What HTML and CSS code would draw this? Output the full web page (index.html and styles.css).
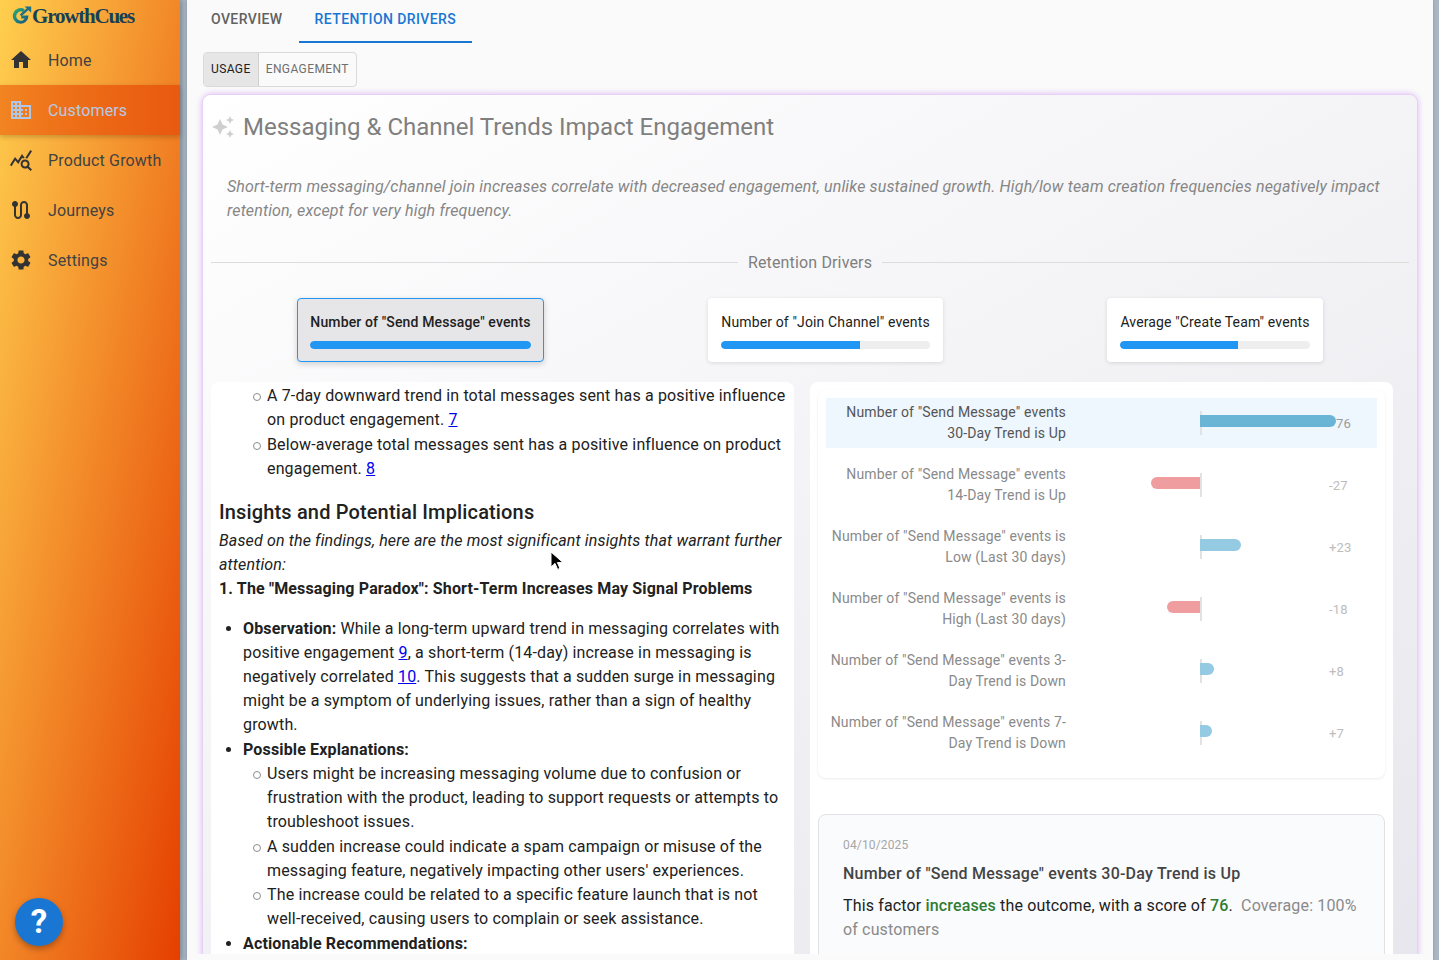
FILE: index.html
```html
<!DOCTYPE html>
<html lang="en">
<head>
<meta charset="utf-8">
<title>GrowthCues</title>
<link rel="stylesheet" href="styles.css">
</head>
<body>
<div class="shell">
  <aside class="sidebar">
    <div class="logo">
      <svg class="logo-mark" viewBox="0 0 20 18" width="20" height="18" aria-hidden="true">
        <defs><linearGradient id="lg" x1="0" y1="0" x2="1" y2="1"><stop offset="0" stop-color="#2fb06a"/><stop offset=".55" stop-color="#1c7d86"/><stop offset="1" stop-color="#1b4f7a"/></linearGradient></defs>
        <path d="M12.6 3.2A7.8 7.8 0 1 0 16.4 9.6H9.2v3h3.6A4.6 4.6 0 1 1 11 5.9Z" fill="url(#lg)"/>
        <path d="M8.6 9.4 16.2 2.6" fill="none" stroke="#1d6f84" stroke-width="2.4"/>
        <path d="M12.6 0.6h6.6v6.2z" fill="#1d6f84"/>
      </svg>
      <span class="logo-text">GrowthCues</span>
    </div>
    <nav class="nav">
      <a class="nav-item"><svg class="nav-icon" viewBox="0 0 24 24"><path d="M10 20v-6h4v6h5v-8h3L12 3 2 12h3v8z"/></svg><span>Home</span></a>
      <a class="nav-item selected"><svg class="nav-icon" viewBox="0 0 24 24"><path d="M12 7V3H2v18h20V7H12zM6 19H4v-2h2v2zm0-4H4v-2h2v2zm0-4H4V9h2v2zm0-4H4V5h2v2zm4 12H8v-2h2v2zm0-4H8v-2h2v2zm0-4H8V9h2v2zm0-4H8V5h2v2zm10 12h-8v-2h2v-2h-2v-2h2v-2h-2V9h8v10zm-2-8h-2v2h2v-2zm0 4h-2v2h2v-2z"/></svg><span>Customers</span></a>
      <a class="nav-item"><svg class="nav-icon" viewBox="0 0 24 24"><path d="M19.88 18.47c.44-.7.7-1.51.7-2.39 0-2.49-2.01-4.5-4.5-4.5s-4.5 2.01-4.5 4.5 2.01 4.5 4.49 4.5c.88 0 1.7-.26 2.39-.7L21.58 23 23 21.58l-3.12-3.11zm-3.8.11c-1.38 0-2.5-1.12-2.5-2.5s1.12-2.5 2.5-2.5 2.5 1.12 2.5 2.5-1.12 2.5-2.5 2.5zm-.36-8.5c-.74.02-1.45.18-2.1.45l-.55-.83-3.8 6.18-3.01-3.52-3.63 5.81L1 17l5-8 3 3.5L13 6l2.72 4.08zm2.59.5c-.64-.28-1.33-.45-2.05-.49L21.38 2 23 3.18l-4.69 7.4z"/></svg><span>Product Growth</span></a>
      <a class="nav-item"><svg class="nav-icon" viewBox="0 0 24 24"><path d="M19 15.18V7c0-2.21-1.79-4-4-4s-4 1.79-4 4v10c0 1.1-.9 2-2 2s-2-.9-2-2V8.82C8.16 8.4 9 7.3 9 6c0-1.66-1.34-3-3-3S3 4.34 3 6c0 1.3.84 2.4 2 2.82V17c0 2.21 1.79 4 4 4s4-1.79 4-4V7c0-1.1.9-2 2-2s2 .9 2 2v8.18c-1.16.41-2 1.51-2 2.82 0 1.66 1.34 3 3 3s3-1.34 3-3c0-1.3-.84-2.4-2-2.82z"/></svg><span>Journeys</span></a>
      <a class="nav-item"><svg class="nav-icon" viewBox="0 0 24 24"><path d="M19.14 12.94c.04-.3.06-.61.06-.94 0-.32-.02-.64-.07-.94l2.03-1.58c.18-.14.23-.41.12-.61l-1.92-3.32c-.12-.22-.37-.29-.59-.22l-2.39.96c-.5-.38-1.03-.7-1.62-.94l-.36-2.54c-.04-.24-.24-.41-.48-.41h-3.84c-.24 0-.43.17-.47.41l-.36 2.54c-.59.24-1.13.57-1.62.94l-2.39-.96c-.22-.08-.47 0-.59.22L2.74 8.87c-.12.21-.08.47.12.61l2.03 1.58c-.05.3-.09.63-.09.94s.02.64.07.94l-2.03 1.58c-.18.14-.23.41-.12.61l1.92 3.32c.12.22.37.29.59.22l2.39-.96c.5.38 1.03.7 1.62.94l.36 2.54c.05.24.24.41.48.41h3.84c.24 0 .44-.17.47-.41l.36-2.54c.59-.24 1.13-.56 1.62-.94l2.39.96c.22.08.47 0 .59-.22l1.92-3.32c.12-.22.07-.47-.12-.61l-2.01-1.58zM12 15.6c-1.98 0-3.6-1.62-3.6-3.6s1.62-3.6 3.6-3.6 3.6 1.62 3.6 3.6-1.62 3.6-3.6 3.6z"/></svg><span>Settings</span></a>
    </nav>
    <button class="help">?</button>
  </aside>

  <main class="main">
    <div class="scroll">
      <div class="tabs">
        <a class="tab">Overview</a>
        <a class="tab active">Retention Drivers</a>
      </div>
      <div class="toggle">
        <span class="toggle-btn on">Usage</span><span class="toggle-btn">Engagement</span>
      </div>
      <section class="card">
        <header class="card-title">
          <svg class="spark" viewBox="0 0 24 24"><path d="M19 9l1.25-2.75L23 5l-2.75-1.25L19 1l-1.25 2.75L15 5l2.75 1.25L19 9zm-7.5.5L9 4 6.5 9.5 1 12l5.5 2.5L9 20l2.5-5.5L17 12l-5.5-2.5zM19 15l-1.25 2.75L15 19l2.75 1.25L19 23l1.25-2.75L23 19l-2.75-1.25L19 15z"/></svg>
          <h1>Messaging &amp; Channel Trends Impact Engagement</h1>
        </header>
        <p class="summary">Short-term messaging/channel join increases correlate with decreased engagement, unlike sustained growth. High/low team creation frequencies negatively impact retention, except for very high frequency.</p>
        <div class="divider"><span>Retention Drivers</span></div>
        <div class="drivers">
          <div class="driver current"><div class="driver-name">Number of "Send Message" events</div><div class="track"><div class="fill" style="width:100%"></div></div></div>
          <div class="driver"><div class="driver-name">Number of "Join Channel" events</div><div class="track"><div class="fill" style="width:66.3%"></div></div></div>
          <div class="driver"><div class="driver-name">Average "Create Team" events</div><div class="track"><div class="fill" style="width:62.2%"></div></div></div>
        </div>
        <div class="panels">
          <div class="panel report">
            <ul class="sub first">
              <li>A 7-day downward trend in total messages sent has a positive influence on product engagement. <a href="#">7</a></li>
              <li>Below-average total messages sent has a positive influence on product engagement. <a href="#">8</a></li>
            </ul>
            <h2>Insights and Potential Implications</h2>
            <p class="lead"><em>Based on the findings, here are the most significant insights that warrant further attention:</em></p>
            <p class="lead"><strong>1. The "Messaging Paradox": Short-Term Increases May Signal Problems</strong></p>
            <ul class="top">
              <li><strong>Observation:</strong> While a long-term upward trend in messaging correlates with positive engagement <a href="#">9</a>, a short-term (14-day) increase in messaging is negatively correlated <a href="#">10</a>. This suggests that a sudden surge in messaging might be a symptom of underlying issues, rather than a sign of healthy growth.</li>
              <li><strong>Possible Explanations:</strong>
                <ul class="sub">
                  <li>Users might be increasing messaging volume due to confusion or frustration with the product, leading to support requests or attempts to troubleshoot issues.</li>
                  <li>A sudden increase could indicate a spam campaign or misuse of the messaging feature, negatively impacting other users' experiences.</li>
                  <li>The increase could be related to a specific feature launch that is not well-received, causing users to complain or seek assistance.</li>
                </ul>
              </li>
              <li><strong>Actionable Recommendations:</strong></li>
            </ul>
          </div>
          <div class="panel side">
            <div class="factors">
              <div class="factor current">
                <div class="factor-label">Number of "Send Message" events 30-Day Trend is Up</div>
                <div class="neg"></div><div class="axis"></div>
                <div class="pos"><div class="bar up strong" style="width:136px"></div><span class="value tight">76</span></div>
              </div>
              <div class="factor">
                <div class="factor-label">Number of "Send Message" events 14-Day Trend is Up</div>
                <div class="neg"><div class="bar down" style="width:49px"></div></div><div class="axis"></div>
                <div class="pos"><span class="value">-27</span></div>
              </div>
              <div class="factor">
                <div class="factor-label">Number of "Send Message" events is Low (Last 30 days)</div>
                <div class="neg"></div><div class="axis"></div>
                <div class="pos"><div class="bar up" style="width:41px"></div><span class="value">+23</span></div>
              </div>
              <div class="factor">
                <div class="factor-label">Number of "Send Message" events is High (Last 30 days)</div>
                <div class="neg"><div class="bar down" style="width:33px"></div></div><div class="axis"></div>
                <div class="pos"><span class="value">-18</span></div>
              </div>
              <div class="factor">
                <div class="factor-label">Number of "Send Message" events 3-Day Trend is Down</div>
                <div class="neg"></div><div class="axis"></div>
                <div class="pos"><div class="bar up" style="width:14px"></div><span class="value">+8</span></div>
              </div>
              <div class="factor">
                <div class="factor-label">Number of "Send Message" events 7-Day Trend is Down</div>
                <div class="neg"></div><div class="axis"></div>
                <div class="pos"><div class="bar up" style="width:12px"></div><span class="value">+7</span></div>
              </div>
            </div>
            <article class="detail">
              <div class="detail-date">04/10/2025</div>
              <div class="detail-title">Number of "Send Message" events 30-Day Trend is Up</div>
              <p class="detail-body">This factor <b class="good">increases</b> the outcome, with a score of <b class="good">76</b>. <span class="muted">&nbsp;Coverage: 100% of customers</span></p>
            </article>
          </div>
        </div>
      </section>
    </div>
  </main>
  <svg class="cursor" viewBox="0 0 14 20" width="14" height="20" aria-hidden="true"><path d="M1 1v15l4-3.6 2.6 6 2.4-1-2.6-5.8H13z" fill="#000" stroke="#fff" stroke-width="1"/></svg>
</div>
</body>
</html>
```
FILE: styles.css
```css
* { box-sizing: border-box; }
html, body { margin: 0; height: 100%; overflow: hidden; }
body { font-family: Roboto, "Liberation Sans", sans-serif; color: #212121; letter-spacing: .15px; }

.shell { position: relative; display: flex; width: 1439px; height: 960px; background: linear-gradient(90deg, #7c8a96, #a9b6c4 7px); overflow: hidden; }

.sidebar { position: relative; flex: 0 0 180px; height: 960px; background: linear-gradient(to bottom right, #ffcf4f, #e53f00); box-shadow: 2px 0 5px rgba(0,0,0,.25); }
.logo { display: flex; align-items: center; height: 35px; padding: 0 0 3px 12px; gap: 0; }
.logo-mark { flex: none; margin-top: -3px; }
.logo-text { font-family: "Liberation Serif", serif; font-weight: 700; font-size: 21px; letter-spacing: -1.2px; color: #173f56; line-height: 30px; }
.nav-item { display: flex; align-items: center; height: 50px; padding-left: 9px; gap: 15px; font-size: 16px; color: #424242; }
.nav-item.selected { background: linear-gradient(90deg, rgba(238,110,20,.75), #e95a10); color: #b7c9e2; box-shadow: 0 2px 5px rgba(0,0,0,.2); }
.nav-icon { width: 24px; height: 24px; fill: #333; flex: none; }
.selected .nav-icon { fill: #b0c7e6; }
.help { position: absolute; left: 15px; top: 898px; width: 48px; height: 48px; border: 0; border-radius: 50%; background: #1976d2; color: #fff; font: 700 33px/48px Roboto, sans-serif; padding: 0; box-shadow: 0 3px 6px rgba(0,0,0,.3); }

.main { flex: 1; margin: 0 6px 0 7px; height: 960px; background: #fafafa; padding-bottom: 6px; box-shadow: 0 0 3px rgba(0,0,0,.2); }
.scroll { height: 954px; overflow: hidden; padding: 0 16px 0 8px; }

.tabs { display: flex; height: 43px; }
.tab { height: 43px; padding: 0 16px 5px; display: flex; align-items: center; font-size: 14px; font-weight: 500; letter-spacing: .4px; text-transform: uppercase; color: #616161; }
.tab.active { color: #1976d2; border-bottom: 2px solid #1976d2; padding-bottom: 3px; }

.toggle { display: inline-flex; margin: 9px 0 8px 8px; height: 35px; border: 1px solid #d9d9d9; border-radius: 4px; overflow: hidden; vertical-align: top; }
.toggle-btn { display: flex; align-items: center; padding: 0 7px 2px; font-size: 12px; letter-spacing: .4px; text-transform: uppercase; color: #6f6f6f; }
.toggle-btn.on { background: #e6e6e6; color: #212121; border-right: 1px solid #cfcfcf; }

.card { margin-left: 8px; height: 1100px; padding: 16px 8px; border-radius: 8px; background: linear-gradient(150deg, #ffffff, #e3e3ea); box-shadow: 0 0 0 1px #e6d0f5, 0 0 6px 1px #dcb8f5; }
.card-title { display: flex; align-items: center; height: 32px; gap: 8px; }
.spark { width: 24px; height: 24px; fill: #cfcfcf; flex: none; }
.card-title h1 { margin: 0; font-size: 24px; font-weight: 400; letter-spacing: 0; color: #7f7f7f; line-height: 32px; }
.summary { margin: 32px 16px 0; font-size: 16px; line-height: 24px; font-style: italic; color: #868686; }

.divider { display: flex; align-items: center; gap: 10px; margin-top: 27px; height: 24px; font-size: 16px; color: #7f7f7f; }
.divider::before, .divider::after { content: ""; height: 1px; background: #dcdcdc; flex: 1; }
.drivers { display: flex; justify-content: space-around; margin: 24px 4px 0; }
.driver { padding: 14px 13px 13px; height: 64px; background: #fff; border-radius: 4px; box-shadow: 0 1px 4px rgba(0,0,0,.12); }
.driver.current { background: #e6e6e9; border: 1px solid #2196f3; padding: 13px 12px 12px; box-shadow: 0 2px 6px rgba(0,0,0,.18); }
.driver-name { font-size: 14px; line-height: 21px; letter-spacing: .135px; white-space: nowrap; color: #212121; }
.current .driver-name { font-weight: 500; }
.track { margin-top: 8px; height: 8px; border-radius: 4px; background: #eeeeee; overflow: hidden; }
.fill { height: 100%; background: #2196f3; border-radius: 4px 0 0 4px; }
.current .fill { border-radius: 4px; }

.panels { display: grid; grid-template-columns: 583px 583px; gap: 16px; margin-top: 20px; }
.panel { background: #fff; border-radius: 8px; }

.report { padding: 2px 8px 0; font-size: 16px; line-height: 24px; color: #212121; }
.report ul { margin: 0; padding: 0; }
.report li { margin-top: .78px; }
.report li:first-child { margin-top: 0; }
.report .sub { list-style: none; padding-left: 24px; }
.report .sub li { position: relative; }
.report .sub li::before { content: ""; position: absolute; left: -14px; top: 9px; width: 6px; height: 6px; border: 1px solid #8c8c8c; border-radius: 50%; }
.report .sub.first { padding-left: 48px; }
.report .top { list-style: disc; padding-left: 24px; margin-top: 16px; }
.report h2 { margin: 15.22px 0 1px; font-size: 20px; font-weight: 500; line-height: 32px; }
.report .lead { margin: 0; }
.report a { color: #0000ee; text-decoration: underline; }

.side { padding: 8px; }
.factors { background: #fff; border-radius: 8px; padding: 8px 8px 0; height: 388px; box-shadow: 0 1px 3px rgba(0,0,0,.08); }
.factor { display: flex; align-items: center; height: 50px; margin-bottom: 12px; color: #8a8a8a; }
.factor.current { background: #eef6fe; color: #555; }
.factor-label { flex: 0 0 240px; font-size: 14px; line-height: 21px; text-align: right; }
.neg { flex: 0 0 134px; height: 24px; display: flex; justify-content: flex-end; align-items: flex-start; }
.axis { flex: none; width: 2px; height: 24px; margin-right: -2px; background: #e2e2e2; }
.pos { position: relative; flex: 1; height: 24px; display: flex; align-items: flex-start; }
.bar { height: 12px; margin-top: 4px; flex: none; }
.bar.up { background: #94cbe2; border-radius: 0 6px 6px 0; }
.bar.up.strong { background: #6ab5d6; }
.bar.down { background: #ef9d9f; border-radius: 6px 0 0 6px; }
.value { margin-left: auto; width: 48px; font-size: 13px; line-height: 24px; margin-top: 1px; color: #bdbdbd; }
.value.tight { margin-left: 0; width: auto; color: #9a9a9a; }

.detail { margin-top: 36px; height: 300px; padding: 23px 24px; border: 1px solid #e2e2e6; border-radius: 8px; background: #fafbfd; }
.detail-date { font-size: 12px; line-height: 14px; color: #a6a6a6; }
.detail-title { margin-top: 10px; font-size: 16px; font-weight: 500; letter-spacing: .23px; line-height: 24px; color: #444; }
.detail-body { margin: 8px 0 0; font-size: 16px; line-height: 24px; color: #212121; }
.good { color: #2e7d32; font-weight: 500; }
.muted { color: #8a8a8a; }

.cursor { position: absolute; left: 550px; top: 551px; }
```
